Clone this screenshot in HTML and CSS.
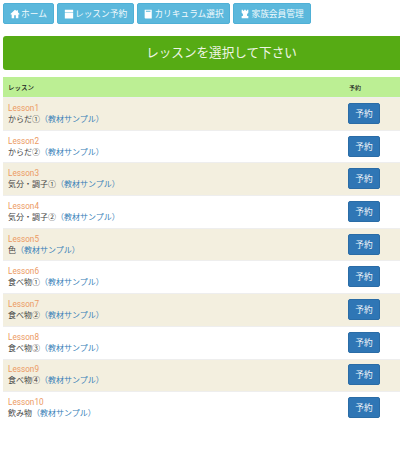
FILE: index.html
```html
<!DOCTYPE html>
<html lang="ja">
<head>
<meta charset="utf-8">
<title>レッスン</title>
<link rel="stylesheet" href="styles.css">
</head>
<body>
<nav class="nav">
  <a class="nav-btn w1"><svg class="ico" viewBox="0 0 12 12"><path d="M6 1 0.5 6l.8.8L2 6.2V11h3V7.5h2V11h3V6.2l.7.6.8-.8L9.5 3.8V1.5H8v1z"/></svg>ホーム</a>
  <a class="nav-btn w2"><svg class="ico" viewBox="0 0 12 12"><path d="M1 .8h10V3.600H1zM1 4.300h10V11.500H1z"/></svg>レッスン予約</a>
  <a class="nav-btn w3"><svg class="ico" viewBox="0 0 12 12"><path d="M2 .8h8.500v10.700H3a1 1 0 0 1-1-1zM3.500 2.200v1h5.500v-1z"/></svg>カリキュラム選択</a>
  <a class="nav-btn w4"><svg class="ico" viewBox="0 0 12 12"><path d="M2 1h1.500v1.200h1.500V1h2v1.200h1.500V1H10v3.500L8.500 6v2.500H10V11H2V8.500h1.500V6L2 4.500z"/></svg>家族会員管理</a>
</nav>
<h1 class="title">レッスンを選択して下さい</h1>
<div class="head"><span>レッスン</span><span class="head-r">予約</span></div>
<div class="row odd"><div class="info"><div class="ln">Lesson1</div><div>からだ①<a class="sample">（教材サンプル）</a></div></div><button class="btn">予約</button></div>
<div class="row"><div class="info"><div class="ln">Lesson2</div><div>からだ②<a class="sample">（教材サンプル）</a></div></div><button class="btn">予約</button></div>
<div class="row odd"><div class="info"><div class="ln">Lesson3</div><div>気分・調子①<a class="sample">（教材サンプル）</a></div></div><button class="btn">予約</button></div>
<div class="row"><div class="info"><div class="ln">Lesson4</div><div>気分・調子②<a class="sample">（教材サンプル）</a></div></div><button class="btn">予約</button></div>
<div class="row odd"><div class="info"><div class="ln">Lesson5</div><div>色<a class="sample">（教材サンプル）</a></div></div><button class="btn">予約</button></div>
<div class="row"><div class="info"><div class="ln">Lesson6</div><div>食べ物①<a class="sample">（教材サンプル）</a></div></div><button class="btn">予約</button></div>
<div class="row odd"><div class="info"><div class="ln">Lesson7</div><div>食べ物②<a class="sample">（教材サンプル）</a></div></div><button class="btn">予約</button></div>
<div class="row"><div class="info"><div class="ln">Lesson8</div><div>食べ物③<a class="sample">（教材サンプル）</a></div></div><button class="btn">予約</button></div>
<div class="row odd"><div class="info"><div class="ln">Lesson9</div><div>食べ物④<a class="sample">（教材サンプル）</a></div></div><button class="btn">予約</button></div>
<div class="row"><div class="info"><div class="ln">Lesson10</div><div>飲み物<a class="sample">（教材サンプル）</a></div></div><button class="btn">予約</button></div>
</body>
</html>
```

FILE: styles.css
```css
html, body { margin: 0; padding: 0; background: #fff; }
body {
  padding: 3px 0 0 3px;
  height: 451px;
  box-sizing: border-box;
  overflow: hidden;
  font-family: "Roboto", "Noto Sans CJK JP", sans-serif;
  font-size: 8px;
  color: #444;
}
.nav { display: flex; gap: 3px; height: 21px; }
.nav-btn {
  display: flex;
  align-items: center;
  justify-content: center;
  gap: 1px;
  background: #5bb8dc;
  border: 1px solid #4fb0d6;
  border-radius: 2px;
  color: #f2fafd;
  font-size: 8.700px;
  box-sizing: border-box;
}
.w1 { width: 51px; }
.w2 { width: 77px; }
.w3 { width: 93px; }
.w4 { width: 78px; }
.ico { width: 10px; height: 10px; fill: #fff; }
.title {
  margin: 12px 0 0;
  height: 34px;
  line-height: 34px;
  padding-left: 40px;
  box-sizing: border-box;
  background: #56ab14;
  border-radius: 3px 0 0 3px;
  color: #eef5e4;
  font-size: 12.600px;
  font-weight: 400;
  text-align: center;
}
.head {
  margin-top: 7px;
  height: 20px;
  display: flex;
  align-items: center;
  justify-content: space-between;
  background: #bcef94;
  font-size: 6.500px;
  font-weight: 500;
  color: #222;
  padding: 0 40px 0 5px;
}
.head-r { width: 11px; font-size: 6px; white-space: nowrap; }
.row {
  height: 32.7px;
  box-sizing: border-box;
  display: flex;
  align-items: center;
  justify-content: space-between;
  padding: 0 20px 0 5px;
  border-top: 1px solid #eee;
}
.odd { background: #f3efdf; }
.info { line-height: 12px; }
.ln { color: #ec9a63; font-size: 8.200px; }
.sample { color: #3a7fb8; }
.btn {
  width: 32px;
  height: 21px;
  margin-bottom: 1px;
  padding: 0;
  background: #2f76b5;
  border: 1px solid #2a6ca6;
  border-radius: 2px;
  color: #f2f6fa;
  font-family: inherit;
  font-size: 8.700px;
}
```
